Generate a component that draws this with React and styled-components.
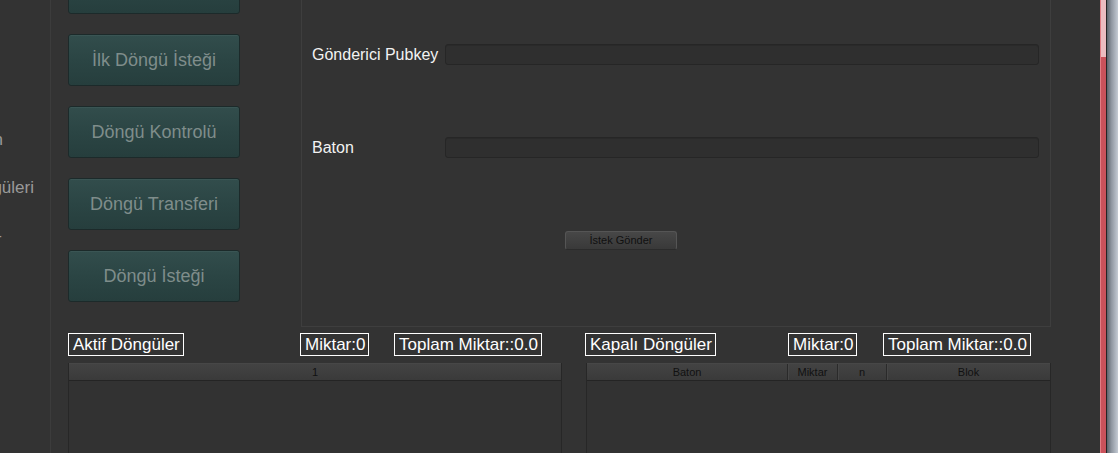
import React from 'react';
import styled, { createGlobalStyle } from 'styled-components';

const GlobalStyle = createGlobalStyle`
  html, body {
    margin: 0;
    padding: 0;
    background: #333333;
    overflow: hidden;
  }
  * {
    box-sizing: border-box;
  }
`;

const Page = styled.div`
  display: flex;
  width: 1118px;
  height: 453px;
  overflow: hidden;
  background: #333333;
  font-family: 'Liberation Sans', Arial, sans-serif;
`;

const Sidebar = styled.div`
  width: 51px;
  flex-shrink: 0;
  border-right: 1px solid #3c3c3c;
  padding-top: 116px;
  overflow: hidden;
`;

const SideItem = styled.div`
  height: 48px;
  display: flex;
  align-items: center;
  justify-content: flex-end;
  padding-right: ${props => props.$clip}px;
  white-space: nowrap;
  font-size: 17px;
  color: #9a9a9a;
`;

const Main = styled.div`
  flex: 1;
  overflow: hidden;
  padding-left: 17px;
`;

const Content = styled.div`
  margin-top: -38px;
  display: flex;
  flex-direction: column;
`;

const UpperRow = styled.div`
  display: flex;
  gap: 61px;
`;

const ButtonColumn = styled.div`
  width: 172px;
  display: flex;
  flex-direction: column;
  gap: 20px;
`;

const MenuButton = styled.button`
  width: 172px;
  height: 52px;
  border: 1px solid #1c2a2a;
  border-radius: 3px;
  background: linear-gradient(180deg, #324d4c 0%, #2b4544 50%, #263e3d 100%);
  box-shadow: inset 0 1px 0 #3a5554;
  color: #7f8d8b;
  font-family: 'Liberation Sans', Arial, sans-serif;
  font-size: 18px;
  padding: 0;
  cursor: pointer;
`;

const Panel = styled.div`
  width: 750px;
  height: 365px;
  border: 1px solid #3e3e3e;
  display: flex;
  flex-direction: column;
  gap: 72px;
  padding: 81px 11px 0 10px;
`;

const FieldRow = styled.div`
  display: grid;
  grid-template-columns: 133px 1fr;
  align-items: center;
  height: 21px;
`;

const FieldLabel = styled.label`
  font-size: 16px;
  color: #f2f2f2;
  white-space: nowrap;
`;

const FieldInput = styled.input`
  height: 21px;
  width: 100%;
  background: #2f2f2f;
  border: 1px solid #262626;
  border-radius: 3px;
  box-shadow: inset 0 1px 0 #2a2a2a;
  outline: none;
  color: #eee;
`;

const SendButton = styled.button`
  width: 112px;
  height: 19px;
  margin-left: 253px;
  padding: 0;
  border: 1px solid #555555;
  border-bottom-color: #2b2b2b;
  border-radius: 3px;
  background: linear-gradient(180deg, #474747, #393939);
  color: #101010;
  font-family: 'Liberation Sans', Arial, sans-serif;
  font-size: 11px;
  cursor: pointer;
`;

const LowerRow = styled.div`
  display: flex;
  gap: 24px;
  margin-top: 6px;
`;

const ListColumn = styled.div`
  width: ${props => props.$width}px;
  display: flex;
  flex-direction: column;
  gap: 7px;
`;

const LabelRow = styled.div`
  display: grid;
  grid-template-columns: ${props => props.$cols};
  margin-left: ${props => props.$shift || 0}px;
`;

const BoxLabel = styled.span`
  justify-self: start;
  border: 1px solid #ffffff;
  padding: 0 3px 0 4px;
  height: 23px;
  line-height: 21px;
  font-size: 17px;
  color: #ffffff;
  white-space: nowrap;
`;

const Table = styled.div`
  height: 120px;
  border-left: 1px solid #272727;
  border-right: 1px solid #272727;
  background: #323232;
`;

const TableHead = styled.div`
  display: grid;
  grid-template-columns: ${props => props.$cols};
  height: 18px;
  background: linear-gradient(180deg, #434343, #3a3a3a);
  border-top: 1px solid #474747;
  border-bottom: 1px solid #242424;
`;

const HeadCell = styled.div`
  display: flex;
  align-items: center;
  justify-content: center;
  font-size: 11px;
  color: #111111;
  border-left: ${props => props.$first ? 'none' : '1px solid #2a2a2a'};
  box-shadow: ${props => props.$first ? 'none' : 'inset 1px 0 0 #474747'};
`;

const Edge = styled.div`
  width: 18px;
  flex-shrink: 0;
  display: flex;
`;

const RedBar = styled.div`
  width: 6px;
  border-left: 1px solid #e07c84;
  background: linear-gradient(180deg, #ecbcc0 0px, #ecbcc0 57px, #c9525b 57px, #c9525b 100%);
`;

const DarkLine = styled.div`
  width: 1px;
  background: #242424;
`;

const Frame = styled.div`
  flex: 1;
  background: linear-gradient(90deg, #5c636b, #8e96a0 40%, #c4cbd4);
`;

const sideItems = [
  { text: 'Ana Ekran', clip: 47 },
  { text: 'Kapalı Döngüleri', clip: 16 },
  { text: 'Çıkış -', clip: 48 },
];

const menu = ['Yeni Döngü', 'İlk Döngü İsteği', 'Döngü Kontrolü', 'Döngü Transferi', 'Döngü İsteği'];

export default function App() {
  return (
    <>
      <GlobalStyle />
      <Page>
        <Sidebar>
          {sideItems.map(item => (
            <SideItem key={item.text} $clip={item.clip}>{item.text}</SideItem>
          ))}
        </Sidebar>

        <Main>
          <Content>
            <UpperRow>
              <ButtonColumn>
                {menu.map(label => (
                  <MenuButton key={label}>{label}</MenuButton>
                ))}
              </ButtonColumn>

              <Panel>
                <FieldRow>
                  <FieldLabel>Gönderici Pubkey</FieldLabel>
                  <FieldInput />
                </FieldRow>
                <FieldRow>
                  <FieldLabel>Baton</FieldLabel>
                  <FieldInput />
                </FieldRow>
                <div>
                  <SendButton>İstek Gönder</SendButton>
                </div>
              </Panel>
            </UpperRow>

            <LowerRow>
              <ListColumn $width={494}>
                <LabelRow $cols="232px 94px auto">
                  <BoxLabel>Aktif Döngüler</BoxLabel>
                  <BoxLabel>Miktar:0</BoxLabel>
                  <BoxLabel>Toplam Miktar::0.0</BoxLabel>
                </LabelRow>
                <Table>
                  <TableHead $cols="1fr">
                    <HeadCell $first>1</HeadCell>
                  </TableHead>
                </Table>
              </ListColumn>

              <ListColumn $width={465}>
                <LabelRow $cols="203px 95px auto" $shift={-1}>
                  <BoxLabel>Kapalı Döngüler</BoxLabel>
                  <BoxLabel>Miktar:0</BoxLabel>
                  <BoxLabel>Toplam Miktar::0.0</BoxLabel>
                </LabelRow>
                <Table>
                  <TableHead $cols="200px 50px 49px 1fr">
                    <HeadCell $first>Baton</HeadCell>
                    <HeadCell>Miktar</HeadCell>
                    <HeadCell>n</HeadCell>
                    <HeadCell>Blok</HeadCell>
                  </TableHead>
                </Table>
              </ListColumn>
            </LowerRow>
          </Content>
        </Main>

        <Edge>
          <RedBar />
          <DarkLine />
          <Frame />
        </Edge>
      </Page>
    </>
  );
}
